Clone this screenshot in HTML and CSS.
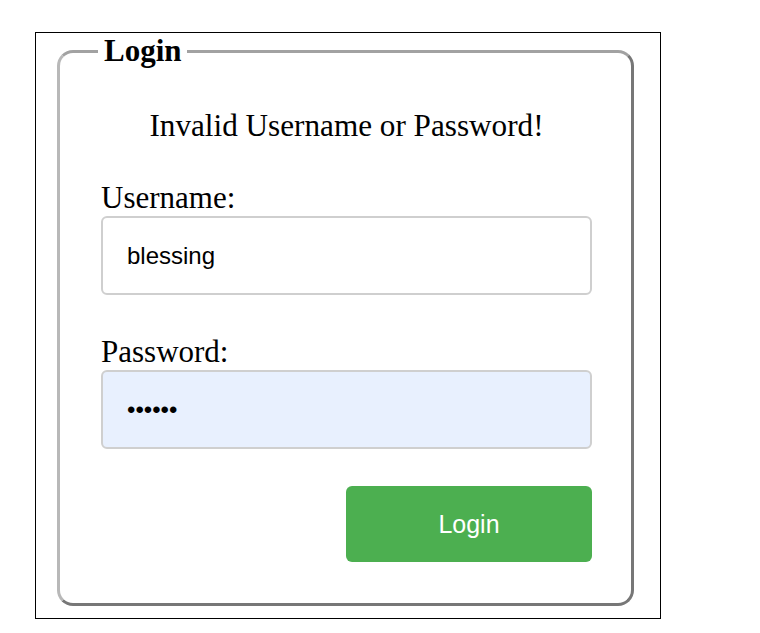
FILE: index.html
```html
<!DOCTYPE html>
<html lang="en">
<head>
<meta charset="utf-8">
<title>Login</title>
<link rel="stylesheet" href="styles.css">
</head>
<body>
<div class="frame">
  <form class="login-form">
    <fieldset class="panel">
      <legend class="panel-title">Login</legend>
      <p class="error">Invalid Username or Password!</p>
      <label class="field-label" for="username">Username:</label>
      <input class="field" id="username" type="text" value="blessing">
      <label class="field-label field-label--second" for="password">Password:</label>
      <input class="field field--autofill" id="password" type="password" value="123456">
      <div class="actions">
        <button class="submit" type="button">Login</button>
      </div>
    </fieldset>
  </form>
</div>
</body>
</html>
```

FILE: styles.css
```css
html, body {
  margin: 0;
  padding: 0;
  background: #ffffff;
}

body {
  font-family: "Liberation Serif", "Times New Roman", serif;
  color: #000;
  padding: 32px 0 0 35px;
}

.frame {
  box-sizing: border-box;
  width: 626px;
  height: 587px;
  border: 1px solid #000;
}

.login-form {
  margin: 0;
}

.panel {
  box-sizing: border-box;
  width: 577px;
  margin: 0 0 0 21px;
  padding: 39px 39px 41px 41px;
  border: 3px solid;
  border-color: #a2a2a2 #777777 #777777 #b8b8b8;
  border-radius: 16px;
  min-inline-size: 0;
}

.panel-title {
  font-size: 31px;
  font-weight: bold;
  padding: 0 5px 0 6px;
  margin-left: -3px;
}

.error {
  margin: 0;
  font-size: 31.2px;
  text-align: center;
}

.field-label {
  display: block;
  margin-top: 36px;
  font-size: 31px;
}

.field-label--second {
  margin-top: 39px;
}

.field {
  display: block;
  box-sizing: border-box;
  width: 100%;
  height: 79px;
  margin: 0;
  padding: 0 24px;
  border: 2px solid #cfcfcf;
  border-radius: 6px;
  background: #fff;
  color: #000;
  font-family: "Liberation Sans", Arial, sans-serif;
  font-size: 24px;
  outline: none;
}

.field--autofill {
  background: #e8f0fe;
}

.actions {
  display: flex;
  justify-content: flex-end;
  margin-top: 37px;
}

.submit {
  width: 246px;
  height: 76px;
  border: none;
  border-radius: 6px;
  background: #4caf50;
  color: #fff;
  font-family: "Liberation Sans", Arial, sans-serif;
  font-size: 25px;
  cursor: pointer;
}
```
